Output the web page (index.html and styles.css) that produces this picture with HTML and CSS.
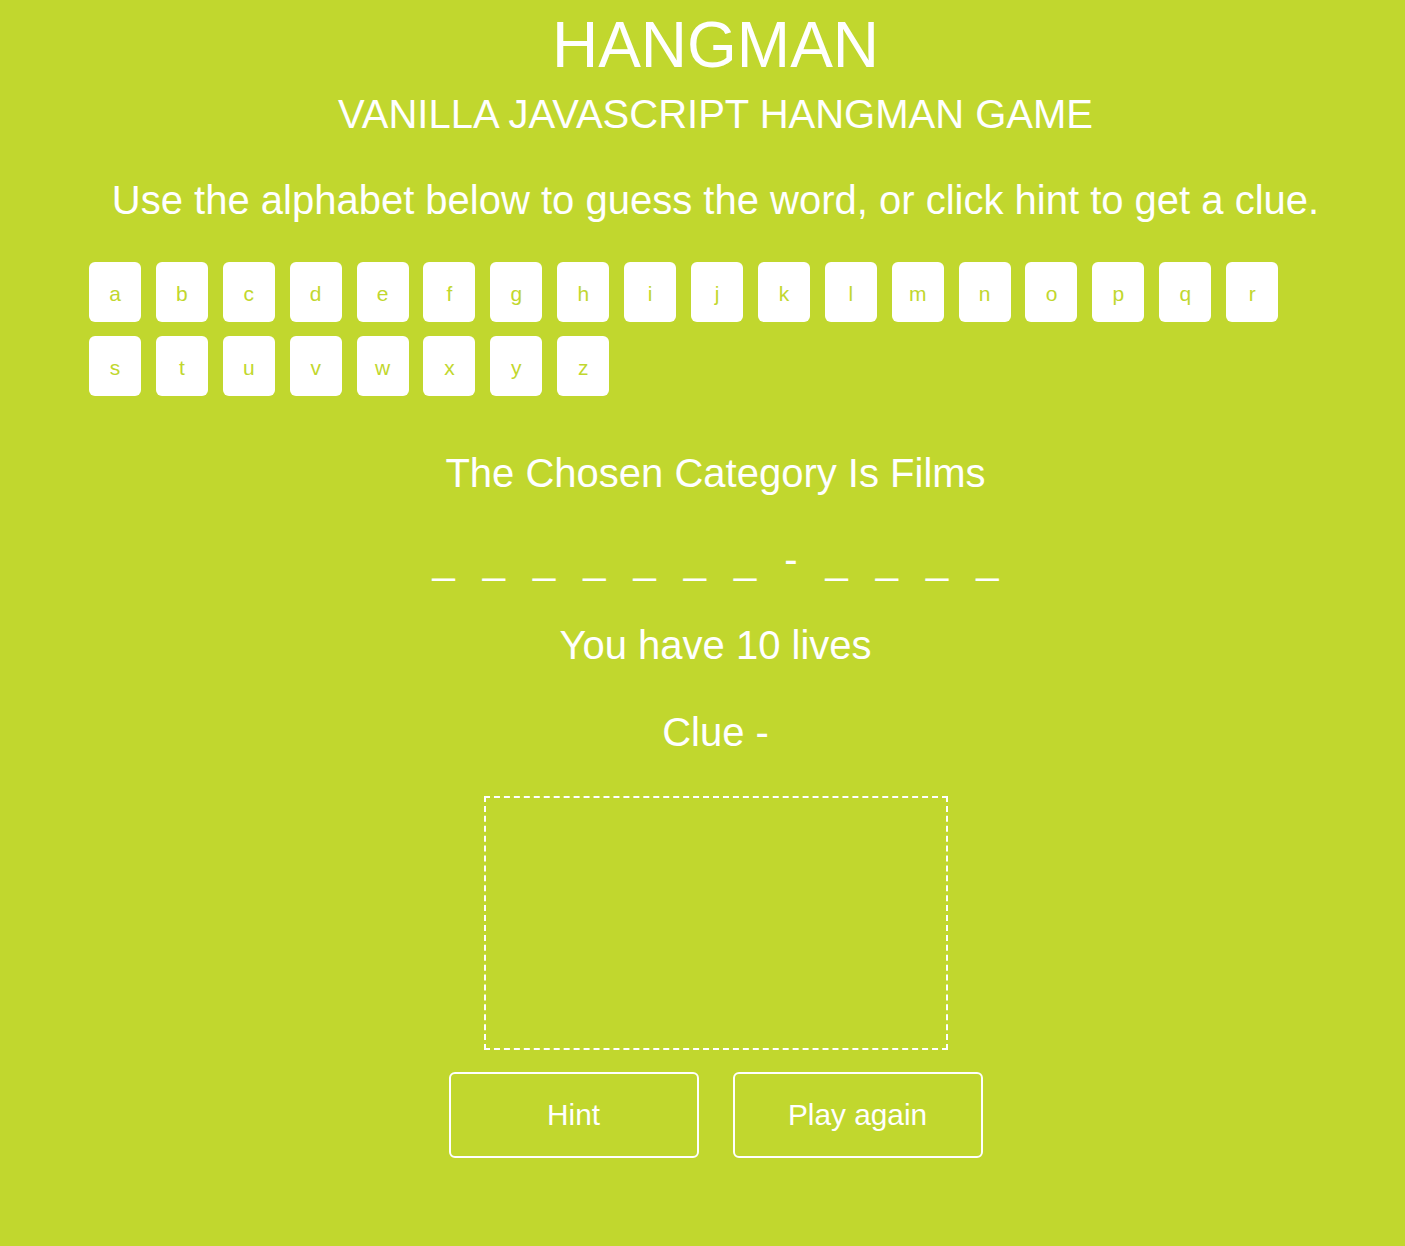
FILE: index.html
```html
<!DOCTYPE html>
<html lang="en">
<head>
<meta charset="utf-8">
<title>Hangman</title>
<link rel="stylesheet" href="styles.css">
</head>
<body>
<div class="wrapper">
  <h1 class="title">HANGMAN</h1>
  <h2 class="subtitle">VANILLA JAVASCRIPT HANGMAN GAME</h2>
  <p class="intro">Use the alphabet below to guess the word, or click hint to get a clue.</p>
  <ul class="alphabet">
    <li class="key">a</li><li class="key">b</li><li class="key">c</li><li class="key">d</li><li class="key">e</li><li class="key">f</li><li class="key">g</li><li class="key">h</li><li class="key">i</li><li class="key">j</li><li class="key">k</li><li class="key">l</li><li class="key">m</li><li class="key">n</li><li class="key">o</li><li class="key">p</li><li class="key">q</li><li class="key">r</li><li class="key">s</li><li class="key">t</li><li class="key">u</li><li class="key">v</li><li class="key">w</li><li class="key">x</li><li class="key">y</li><li class="key">z</li>
  </ul>
  <p class="category">The Chosen Category Is Films</p>
  <ul class="word"><li class="slot">_</li><li class="slot">_</li><li class="slot">_</li><li class="slot">_</li><li class="slot">_</li><li class="slot">_</li><li class="slot">_</li><li class="slot">-</li><li class="slot">_</li><li class="slot">_</li><li class="slot">_</li><li class="slot">_</li></ul>
  <p class="lives">You have 10 lives</p>
  <p class="clue">Clue -</p>
  <div class="stage"><div class="canvas"></div></div>
  <div class="actions">
    <button class="btn" type="button">Hint</button>
    <button class="btn" type="button">Play again</button>
  </div>
</div>
</body>
</html>
```
FILE: styles.css
```css
html, body {
  margin: 0;
  padding: 0;
  background: #c1d72e;
}
body {
  font-family: "Liberation Sans", Arial, Helvetica, sans-serif;
  color: #fff;
}
.wrapper {
  width: 1379px;
  margin-left: 26px;
  padding-top: 8px;
  text-align: center;
}
.title {
  margin: 0;
  font-size: 64px;
  line-height: 74px;
  font-weight: normal;
}
.subtitle {
  margin: 9px 0 0;
  font-size: 40px;
  line-height: 46px;
  font-weight: normal;
}
.intro {
  margin: 40px 0 0;
  font-size: 40px;
  line-height: 46px;
}
.alphabet {
  list-style: none;
  margin: 39px 0 0 63px;
  padding: 0;
  width: 1200px;
  display: flex;
  flex-wrap: wrap;
  column-gap: 14.9px;
  row-gap: 13.5px;
}
.key {
  width: 52px;
  height: 60px;
  box-sizing: border-box;
  background: #fff;
  color: #c1d72e;
  border-radius: 6px;
  font-size: 21px;
  display: flex;
  align-items: center;
  justify-content: center;
  padding-top: 4px;
}
.category {
  margin: 54px 0 0;
  font-size: 40px;
  line-height: 46px;
}
.word {
  list-style: none;
  margin: 40px 0 0;
  padding: 0;
  display: flex;
  justify-content: center;
  font-size: 40px;
  line-height: 46px;
}
.slot {
  padding: 0 14px;
}
.lives {
  margin: 40px 0 0;
  font-size: 40px;
  line-height: 46px;
}
.clue {
  margin: 41px 0 0;
  font-size: 40px;
  line-height: 46px;
}
.stage {
  margin-top: 41px;
  display: flex;
  justify-content: center;
}
.canvas {
  width: 460px;
  height: 250px;
  border: 2px dashed #fff;
}
.actions {
  margin-top: 22px;
  display: flex;
  justify-content: center;
  gap: 34px;
}
.btn {
  width: 250px;
  height: 86px;
  background: transparent;
  border: 2px solid #fff;
  border-radius: 6px;
  color: #fff;
  font-family: "Liberation Sans", Arial, Helvetica, sans-serif;
  font-size: 29.8px;
  padding: 0;
}
```
